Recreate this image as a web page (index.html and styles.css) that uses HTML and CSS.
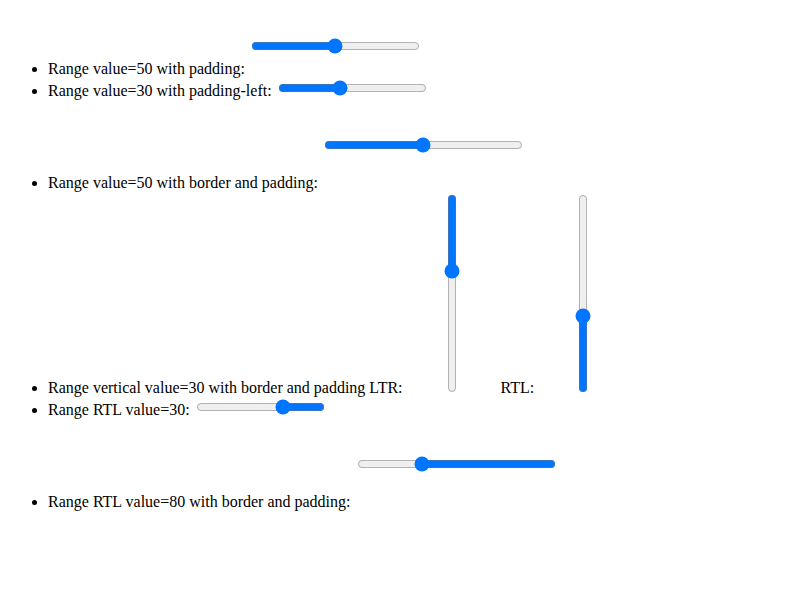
FILE: index.html
```html
<!DOCTYPE html>
<html>
<head>
<meta charset="utf-8">
<link rel="stylesheet" href="styles.css">
</head>
<body>
<ul class="list">
<li>Range value=50 with padding: <input type="range" value="50" class="r-pad"></li>
<li>Range value=30 with padding-left: <input type="range" value="30" class="r-padleft"></li>
<li>Range value=50 with border and padding: <input type="range" value="50" class="r-bp"></li>
<li>Range vertical value=30 with border and padding LTR: <input type="range" value="30" class="r-bp r-vert"> RTL: <input type="range" value="30" class="r-bp r-vert r-rtl"></li>
<li>Range RTL value=30: <input type="range" value="30" class="r-rtl"></li>
<li>Range RTL value=80 with border and padding: <input type="range" value="80" class="r-bp r-rtl"></li>
</ul>
</body>
</html>
```
FILE: styles.css
```css
body {
  font-family: "Liberation Serif", "Times New Roman", serif;
  font-size: 16px;
}
.list {
  margin-top: 8px;
}
.r-pad {
  padding: 20px;
}
.r-padleft {
  padding-left: 20px;
}
.r-bp {
  border: 5px solid black;
  padding: 30px;
}
.r-vert {
  writing-mode: vertical-lr;
}
.r-rtl {
  direction: rtl;
}
```
